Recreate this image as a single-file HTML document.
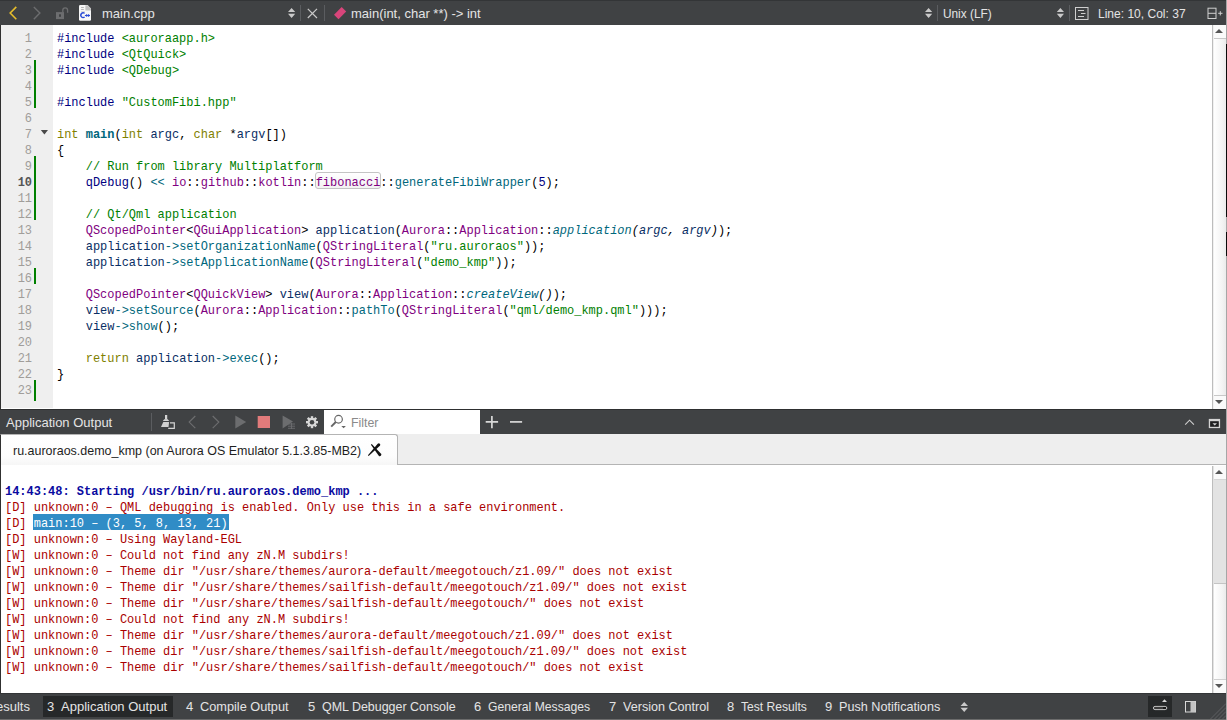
<!DOCTYPE html>
<html><head><meta charset="utf-8">
<style>
*{margin:0;padding:0;box-sizing:border-box}
html,body{width:1227px;height:720px;overflow:hidden;background:#fff;font-family:"Liberation Sans",sans-serif;position:relative}
.abs{position:absolute}
svg{position:absolute;left:0;top:0;overflow:visible}
#tb{left:0;top:0;width:1227px;height:25px;background:#404244;border-top:1px solid #333537}
#editor{left:0;top:25px;width:1227px;height:384px;background:#fff;border-left:1px solid #303030}
#gutter{left:1px;top:25px;width:52px;height:383px;background:#efefef}
.code{font-family:"Liberation Mono",monospace;font-size:11.97px;line-height:16px;white-space:pre;}
#codetext{left:57px;top:31px;color:#000}
#lnums{left:0;top:31px;width:32px;text-align:right;color:#a09d9a}
.gb{position:absolute;left:34px;width:2px;background:#008000}
#outhdr{left:0;top:409px;width:1227px;height:25px;background:#404244;border-top:1px solid #2e2f30}
#tabbar{left:0;top:434px;width:1227px;height:31px;background:#eeeeee;border-bottom:1px solid #b4b4b4}
#tab{left:0;top:434px;width:398px;height:31px;background:linear-gradient(#ffffff,#fdfdfd 70%,#f6f6f6);border-top:1px solid #b4b4b4;border-right:1px solid #b4b4b4;border-left:1px solid #303030;border-top-right-radius:3px}
#outarea{left:0;top:465px;width:1227px;height:228px;background:#fff;border-left:1px solid #303030}
#outtext{left:5px;top:484px;color:#aa0000}
#status{left:0;top:693px;width:1227px;height:27px;background:#404244;border-top:1px solid #333537;border-bottom:1px solid #6c6c6c}
.ui{position:absolute;font-size:13px;color:#e4e4e4;white-space:pre;line-height:15px}
.sx{display:inline-block;transform-origin:0 0}
.sep{position:absolute;width:1px;background:#5b5d60}
.vsb{position:absolute;left:1212px;width:15px;background:#f0f0f0;border-left:1px solid #bdbdbd;border-right:1px solid #9a9a9a}
.sbtn{position:absolute;left:1px;width:13px;height:13px;background:#fafafa}
.slider{position:absolute;left:1px;width:13px;background:linear-gradient(90deg,#ffffff,#f4f4f4 60%,#e9e9e9)}
/* syntax */
.pp{color:#000080}.st{color:#008000}.kw{color:#808000}.ty{color:#800080}.fn{color:#00677c}
.lc{color:#092e64}.cm{color:#008000}.nu{color:#000080}.op{color:#5050a8}.it{font-style:italic}.b{font-weight:bold}
</style></head><body>
<!-- ============ TOOLBAR ============ -->
<div id="tb" class="abs"></div>
<svg width="1227" height="25">
  <polyline points="16.3,6.9 10.2,13 16.3,19.2" fill="none" stroke="#e6bd2c" stroke-width="1.6"/>
  <polyline points="33.8,6.9 39.9,13 33.8,19.2" fill="none" stroke="#6c6d6f" stroke-width="1.4"/>
  <rect x="56" y="12.1" width="8" height="7" fill="#6c6d6f"/>
  <rect x="59" y="14.3" width="2" height="2.5" fill="#404244"/>
  <path d="M62.8 12.6 V10.3 A2.4 2.4 0 0 1 67.6 10.3 V12.8" fill="none" stroke="#6c6d6f" stroke-width="1.3"/>
  <!-- file icon -->
  <rect x="79" y="5" width="12" height="15.8" rx="1.2" fill="#f7f7f7"/>
  <path d="M85.4 5.2 H87.4 L91 8.8 V10.5 H85.4Z" fill="#c2c2c2"/>
  <path d="M87.4 4.8 L91.3 8.7 V4.8Z" fill="#404244"/>
  <rect x="81.1" y="7.1" width="2.7" height="0.7" fill="#9a9a9a"/>
  <rect x="81.1" y="9.2" width="2.7" height="0.7" fill="#9a9a9a"/>
  <rect x="81.1" y="11" width="3.8" height="0.6" fill="#c6c6c6"/>
  <path d="M84.6 13.4 A2.2 2.45 0 1 0 84.6 16.9" fill="none" stroke="#2a4bd6" stroke-width="1.4"/>
  <path d="M84.9 15.5 H90" stroke="#2a4bd6" stroke-width="1.1"/>
  <path d="M86.7 14.1 V16.9 M88.6 14.1 V16.9" stroke="#2a4bd6" stroke-width="0.9"/>
  <!-- combo arrows -->
  <path d="M288 12 L291.6 8 L295.2 12Z M288 13.8 L291.6 18 L295.2 13.8Z" fill="#c9c9c9"/>
  <path d="M925 12 L928.6 8 L932.2 12Z M925 13.8 L928.6 18 L932.2 13.8Z" fill="#c9c9c9"/>
  <path d="M1056.8 12 L1060.4 8 L1064 12Z M1056.8 13.8 L1060.4 18 L1064 13.8Z" fill="#c9c9c9"/>
  <!-- close X -->
  <path d="M307.8 8.8 L317 18 M317 8.8 L307.8 18" stroke="#c9c9c9" stroke-width="1.2"/>
  <!-- diamond -->
  <polygon points="334,14.7 341.7,6.9 346.2,11.4 338.5,19.2" fill="#d8457a"/>
  <!-- doc icon -->
  <rect x="1075.5" y="7.5" width="12.5" height="12" fill="none" stroke="#cfcfcf" stroke-width="1"/>
  <path d="M1078 10.5 H1084 M1081 13.5 H1085.5 M1078 16.5 H1084" stroke="#cfcfcf" stroke-width="1"/>
  <!-- split icon -->
  <rect x="1208" y="8.2" width="8" height="10.3" fill="none" stroke="#cfcfcf" stroke-width="1"/>
  <path d="M1208 13.3 H1216 M1218.2 13.3 H1222.5 M1220.3 11.2 V15.4" stroke="#cfcfcf" stroke-width="1"/>
</svg>
<div class="sep" style="left:300px;top:5px;height:16px"></div>
<div class="sep" style="left:324px;top:5px;height:16px"></div>
<div class="sep" style="left:937px;top:5px;height:16px"></div>
<div class="sep" style="left:1069px;top:5px;height:16px"></div>
<div class="ui" style="left:102px;top:6px">main.cpp</div>
<div class="ui" style="left:351px;top:6px">main(int, char **) -&gt; int</div>
<div class="ui" style="left:943px;top:6px"><span class="sx" style="transform:scaleX(0.91)">Unix (LF)</span></div>
<div class="ui" style="left:1098px;top:6px"><span class="sx" style="transform:scaleX(0.925)">Line: 10, Col: 37</span></div>

<!-- ============ EDITOR ============ -->
<div id="editor" class="abs"></div>
<div id="gutter" class="abs"></div>
<div class="gb" style="top:60px;height:48px"></div>
<div class="gb" style="top:156px;height:64px"></div>
<div class="gb" style="top:268px;height:16px"></div>
<div class="gb" style="top:380px;height:21px"></div>
<svg width="60" height="200"><path d="M40.8 130 L48 130 L44.4 134.4Z" fill="#4a4a4a"/></svg>
<div id="lnums" class="abs code">1
2
3
4
5
6
7
8
9
<b style="color:#555">10</b>
11
12
13
14
15
16
17
18
19
20
21
22
23</div>
<div class="abs" style="left:315px;top:172px;width:66px;height:17px;border:1px solid #c4c4c4;border-radius:3px;background:linear-gradient(#fff,#f2f2f2)"></div>
<div id="codetext" class="abs code"><span class="pp">#include</span> <span class="st">&lt;auroraapp.h&gt;</span>
<span class="pp">#include</span> <span class="st">&lt;QtQuick&gt;</span>
<span class="pp">#include</span> <span class="st">&lt;QDebug&gt;</span>

<span class="pp">#include</span> <span class="st">"CustomFibi.hpp"</span>

<span class="kw">int</span> <span class="fn b">main</span>(<span class="kw">int</span> <span class="lc">argc</span>, <span class="kw">char</span> *<span class="lc">argv</span>[])
{
    <span class="cm">// Run from library Multiplatform</span>
    <span class="pp">qDebug</span>() <span class="fn">&lt;&lt;</span> <span class="ty">io</span>::<span class="ty">github</span>::<span class="ty">kotlin</span>::<span class="ty">fibonacci</span>::<span class="fn">generateFibiWrapper</span>(<span class="nu">5</span>);

    <span class="cm">// Qt/Qml application</span>
    <span class="ty">QScopedPointer</span>&lt;<span class="ty">QGuiApplication</span>&gt; <span class="lc">application</span>(<span class="ty">Aurora</span>::<span class="ty">Application</span>::<i><span class="fn">application</span>(<span class="lc">argc</span>, <span class="lc">argv</span>)</i>);
    <span class="lc">application</span><span class="fn">-&gt;</span><span class="fn">setOrganizationName</span>(<span class="ty">QStringLiteral</span>(<span class="st">"ru.auroraos"</span>));
    <span class="lc">application</span><span class="fn">-&gt;</span><span class="fn">setApplicationName</span>(<span class="ty">QStringLiteral</span>(<span class="st">"demo_kmp"</span>));

    <span class="ty">QScopedPointer</span>&lt;<span class="ty">QQuickView</span>&gt; <span class="lc">view</span>(<span class="ty">Aurora</span>::<span class="ty">Application</span>::<i><span class="fn">createView</span>()</i>);
    <span class="lc">view</span><span class="fn">-&gt;</span><span class="fn">setSource</span>(<span class="ty">Aurora</span>::<span class="ty">Application</span>::<span class="fn">pathTo</span>(<span class="ty">QStringLiteral</span>(<span class="st">"qml/demo_kmp.qml"</span>)));
    <span class="lc">view</span><span class="fn">-&gt;</span><span class="fn">show</span>();

    <span class="kw">return</span> <span class="lc">application</span><span class="fn">-&gt;</span><span class="fn">exec</span>();
}
</div>
<!-- editor scrollbar -->
<div class="vsb" style="top:25px;height:384px">
  <div class="sbtn" style="top:0"></div>
  <div class="slider" style="top:13px;height:358px;border-top:1px solid #c8c8c8;border-bottom:1px solid #c8c8c8"></div>
  <div class="sbtn" style="top:371px"></div>
</div>
<svg width="1227" height="720">
  <path d="M1215 33 L1219 29 L1223 33Z" fill="#555"/>
  <path d="M1215 400 L1219 404 L1223 400Z" fill="#555"/>
</svg>

<!-- ============ OUTPUT HEADER ============ -->
<div id="outhdr" class="abs"></div>
<div class="ui" style="left:6px;top:415px">Application Output</div>
<div class="sep" style="left:151px;top:413px;height:18px"></div>
<div class="abs" style="left:324px;top:410px;width:156px;height:24px;background:#fff"></div>
<div class="ui" style="left:351px;top:415px;color:#8a8a8a"><span class="sx" style="transform:scaleX(0.95)">Filter</span></div>
<svg width="1227" height="720">
  <!-- broom -->
  <rect x="165" y="415" width="2.2" height="4.6" fill="#d4d4d4"/>
  <path d="M162.8 420.9 L164.2 419.2 H167.8 L169.2 420.9Z" fill="#d4d4d4"/>
  <path d="M161 426.9 L163.3 422.1 H169.1 L168.5 426.9Z" fill="#d0d0d0"/>
  <path d="M170 422.9 H174.3 V428.3 H168.2" fill="none" stroke="#d4d4d4" stroke-width="1.2"/>
  <polyline points="195.3,416 189.2,422.1 195.3,428.2" fill="none" stroke="#6c6d6f" stroke-width="1.2"/>
  <polyline points="212.7,416 218.8,422.1 212.7,428.2" fill="none" stroke="#6c6d6f" stroke-width="1.2"/>
  <path d="M235.3 415.6 L246.2 422.1 L235.3 428.6Z" fill="#6c6d6f"/>
  <rect x="257.7" y="416" width="12.3" height="12" fill="#e27b7b"/>
  <path d="M282.6 415.6 L293 421.5 L282.6 428.6Z" fill="#6c6d6f"/>
  <path d="M288 424 H295 M288 426.2 H295 M288 428.3 H295 M291.5 423 V429" stroke="#6c6d6f" stroke-width="0.9"/>
  <!-- gear -->
  <g transform="translate(312,422.2)" fill="#d8d8d8">
    <circle r="4.4"/>
    <rect x="-1.2" y="-6" width="2.4" height="12"/>
    <rect x="-1.2" y="-6" width="2.4" height="12" transform="rotate(45)"/>
    <rect x="-1.2" y="-6" width="2.4" height="12" transform="rotate(90)"/>
    <rect x="-1.2" y="-6" width="2.4" height="12" transform="rotate(135)"/>
    <circle r="2.3" fill="#404244"/>
  </g>
  <!-- magnifier -->
  <circle cx="338.55" cy="419.25" r="3.8" fill="none" stroke="#666" stroke-width="1.2"/>
  <path d="M335.8 422 L331.2 426.7" stroke="#666" stroke-width="1.9"/>
  <path d="M341.3 426 H345.9 L343.6 428.2Z" fill="#666"/>
  <!-- plus minus -->
  <path d="M485.7 421.9 H498.1 M491.9 416 V428.2" stroke="#d8d8d8" stroke-width="1.7"/>
  <path d="M510 421.9 H522.1" stroke="#d8d8d8" stroke-width="1.7"/>
  <!-- chevron up -->
  <polyline points="1185.2,424.7 1189.55,420.2 1193.9,424.7" fill="none" stroke="#d0d0d0" stroke-width="1.1"/>
  <!-- maximize icon -->
  <rect x="1208.8" y="418.9" width="11.3" height="9.2" fill="#d4d4d4"/>
  <rect x="1210.1" y="421.2" width="8.7" height="5.6" fill="#1e1f20"/>
  <path d="M1212.5 423.2 H1217 L1214.75 425.4Z" fill="#d4d4d4"/>
</svg>

<!-- ============ TAB BAR ============ -->
<div id="tabbar" class="abs"></div>
<div id="tab" class="abs"></div>
<div class="ui" style="left:13px;top:443px;color:#1e1e1e"><span class="sx" style="transform:scaleX(0.96)">ru.auroraos.demo_kmp (on Aurora OS Emulator 5.1.3.85-MB2)</span></div>
<svg width="1227" height="720">
  <path d="M370.9 444.7 L371.7 444.1 L381.05 453.74 A1.5 1.5 0 0 1 378.75 455.66 Z" fill="#111"/>
  <path d="M368.66 455.95 L367.94 455.25 L377.72 443.66 A1.5 1.5 0 0 1 379.88 445.74 Z" fill="#111"/>
</svg>

<!-- ============ OUTPUT ============ -->
<div id="outarea" class="abs"></div>
<div class="abs" style="left:33px;top:514px;width:196px;height:16px;background:#308cc6"></div>
<div id="outtext" class="abs code"><span style="color:#0a0aa0;font-weight:bold">14:43:48: Starting /usr/bin/ru.auroraos.demo_kmp ...</span>
[D] unknown:0 – QML debugging is enabled. Only use this in a safe environment.
[D] <span style="color:#fff">main:10 – (3, 5, 8, 13, 21)</span>
[D] unknown:0 – Using Wayland-EGL
[W] unknown:0 – Could not find any zN.M subdirs!
[W] unknown:0 – Theme dir "/usr/share/themes/aurora-default/meegotouch/z1.09/" does not exist
[W] unknown:0 – Theme dir "/usr/share/themes/sailfish-default/meegotouch/z1.09/" does not exist
[W] unknown:0 – Theme dir "/usr/share/themes/sailfish-default/meegotouch/" does not exist
[W] unknown:0 – Could not find any zN.M subdirs!
[W] unknown:0 – Theme dir "/usr/share/themes/aurora-default/meegotouch/z1.09/" does not exist
[W] unknown:0 – Theme dir "/usr/share/themes/sailfish-default/meegotouch/z1.09/" does not exist
[W] unknown:0 – Theme dir "/usr/share/themes/sailfish-default/meegotouch/" does not exist</div>
<div class="vsb" style="top:466px;height:227px;background:#e3e3e3">
  <div class="sbtn" style="top:0"></div>
  <div class="abs" style="left:1px;top:13px;width:13px;height:1px;background:#d6d6d6"></div>
  <div class="slider" style="top:117px;height:97px;border-top:1px solid #c4c4c4;border-bottom:1px solid #d0d0d0"></div>
  <div class="sbtn" style="top:214px"></div>
</div>
<svg width="1227" height="720">
  <path d="M1215 474 L1219 470 L1223 474Z" fill="#555"/>
  <path d="M1215 684 L1219 688 L1223 684Z" fill="#555"/>
</svg>

<!-- ============ STATUS BAR ============ -->
<div id="status" class="abs"></div>
<div class="abs" style="left:43px;top:696px;width:130px;height:21px;background:#262829"></div>
<div class="abs" style="left:1148px;top:696px;width:24px;height:21px;background:#262829"></div>
<div class="ui" style="left:-4px;top:699px">esults</div>
<div class="ui" style="left:47px;top:699px">3</div><div class="ui" style="left:61px;top:699px">Application Output</div>
<div class="ui" style="left:186px;top:699px">4</div><div class="ui" style="left:200px;top:699px"><span class="sx" style="transform:scaleX(0.98)">Compile Output</span></div>
<div class="ui" style="left:308px;top:699px">5</div><div class="ui" style="left:322px;top:699px"><span class="sx" style="transform:scaleX(0.957)">QML Debugger Console</span></div>
<div class="ui" style="left:474px;top:699px">6</div><div class="ui" style="left:488px;top:699px"><span class="sx" style="transform:scaleX(0.936)">General Messages</span></div>
<div class="ui" style="left:609px;top:699px">7</div><div class="ui" style="left:623px;top:699px"><span class="sx" style="transform:scaleX(0.968)">Version Control</span></div>
<div class="ui" style="left:727px;top:699px">8</div><div class="ui" style="left:741px;top:699px"><span class="sx" style="transform:scaleX(0.93)">Test Results</span></div>
<div class="ui" style="left:825px;top:699px">9</div><div class="ui" style="left:839px;top:699px"><span class="sx" style="transform:scaleX(0.973)">Push Notifications</span></div>
<svg width="1227" height="720">
  <path d="M960.5 706 L964.2 702 L968 706Z M960.5 707.8 L964.2 712 L968 707.8Z" fill="#c9c9c9"/>
  <path d="M1162 702 L1164.5 699.3 L1167 702Z" fill="#d8d8d8"/>
  <rect x="1153.4" y="706.4" width="13.4" height="3.2" rx="1.6" fill="#3a3a3a" stroke="#d0d0d0" stroke-width="0.9"/>
  <rect x="1163" y="707.2" width="3" height="1.6" fill="#111"/>
  <rect x="1185.5" y="701.5" width="10" height="10.5" fill="none" stroke="#d8d8d8" stroke-width="1"/>
  <rect x="1190.5" y="701.5" width="5" height="10.5" fill="#c4c4c4"/>
  <path d="M1210.5 719 L1226 703.5 M1214.5 719 L1226 707.5 M1218.5 719 L1226 711.5 M1222.5 719 L1226 715.5" stroke="#5e5f62" stroke-width="1"/>
</svg>
<div class="abs" style="left:1226px;top:0px;width:1px;height:720px;background:#a6a6a6"></div>
<div class="abs" style="left:1226px;top:44px;width:1px;height:173px;background:#0a0a0a"></div>
<div class="abs" style="left:1226px;top:232px;width:1px;height:24px;background:#0a0a0a"></div>
</body></html>
